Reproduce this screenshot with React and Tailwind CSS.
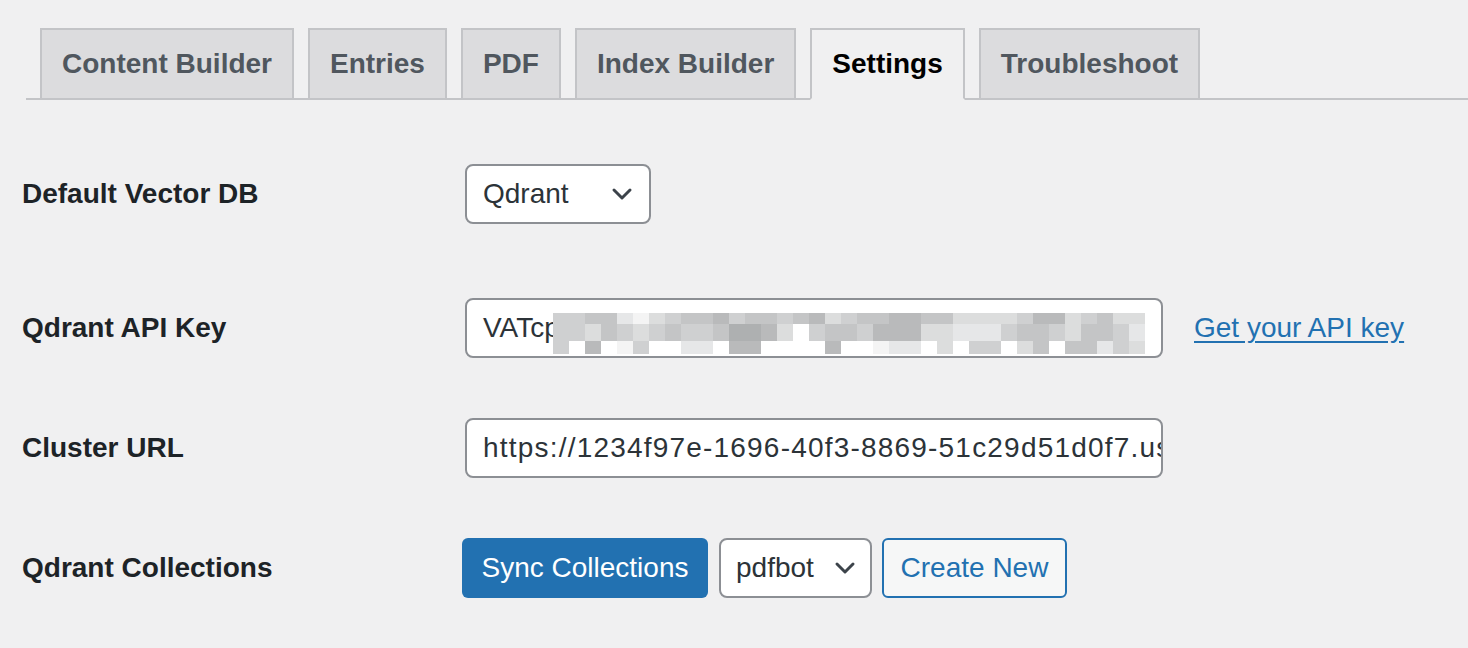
import React from 'react';

const tabs = [
  { label: 'Content Builder' },
  { label: 'Entries' },
  { label: 'PDF' },
  { label: 'Index Builder' },
  { label: 'Settings', active: true },
  { label: 'Troubleshoot' },
];

// pixelated (redacted) part of the API key
const blurRows = [
  { y: 0, h: 11, cells: '4455213455645545634556655333346634533' },
  { y: 11, h: 17, cells: '4435434544577630455466633222455435542' },
  { y: 28, h: 13, cells: '4060140022066000060012203044035055243' },
];
const blurColors = {
  0: '#ffffff',
  1: '#f4f4f4',
  2: '#e6e7e8',
  3: '#dcdddd',
  4: '#cfd0d1',
  5: '#c4c5c6',
  6: '#b9babb',
  7: '#aeb0b1',
};

const Chevron = ({ className = '' }) => (
  <svg className={className} width="22" height="14" viewBox="0 0 22 14" fill="none">
    <path d="M3 3l8 8 8-8" stroke="#3c434a" strokeWidth="3" strokeLinecap="round" strokeLinejoin="round" />
  </svg>
);

const Row = ({ label, className = '', children }) => (
  <div className={`flex items-center h-[60px] ${className}`}>
    <div className="w-[462px] pl-[22px] text-[28px] font-bold text-[#1d2327]">{label}</div>
    <div className="flex items-center">{children}</div>
  </div>
);

const inputBox =
  'h-[60px] bg-white border-2 border-[#8c8f94] rounded-[8px] flex items-center text-[28px] text-[#2c3338]';

export default function App() {
  return (
    <div className="min-h-[648px] bg-[#f0f0f1] font-['Liberation_Sans',Arial,sans-serif] overflow-hidden">
      {/* Tabs */}
      <div className="ml-[26px] pt-[28px] flex items-end border-b-2 border-[#c3c4c7]">
        {tabs.map((t) => (
          <div
            key={t.label}
            className={`ml-[14px] -mb-[2px] border-2 px-[20px] py-[10px] leading-[48px] text-[28px] font-bold ${
              t.active
                ? 'bg-[#f0f0f1] border-[#c3c4c7] border-b-[#f0f0f1] text-black'
                : 'bg-[#dcdcde] border-[#c3c4c7] text-[#50575e]'
            }`}
          >
            {t.label}
          </div>
        ))}
      </div>

      {/* Settings form */}
      <Row label="Default Vector DB" className="mt-[64px]">
        <div className={`${inputBox} ml-[3px] w-[186px] pl-[16px] pr-[16px] justify-between`}>
          <span>Qdrant</span>
          <Chevron />
        </div>
      </Row>

      <Row label="Qdrant API Key" className="mt-[74px]">
        <div className={`${inputBox} ml-[3px] w-[698px] pl-[16px] relative overflow-hidden`}>
          <span>VATcp</span>
          <svg className="absolute left-[86px] top-[13px]" width="592" height="41" viewBox="0 0 592 41">
            {blurRows.map((r) =>
              r.cells.split('').map((c, i) => (
                <rect key={`${r.y}-${i}`} x={i * 16} y={r.y} width="16" height={r.h} fill={blurColors[c]} />
              ))
            )}
          </svg>
        </div>
        <a href="#" className="ml-[31px] text-[28px] text-[#2271b1] underline underline-offset-[4px]">
          Get your API key
        </a>
      </Row>

      <Row label="Cluster URL" className="mt-[60px]">
        <input
          readOnly
          value="https://1234f97e-1696-40f3-8869-51c29d51d0f7.us-east4-0.gcp.cloud.qdrant.io"
          className={`${inputBox} ml-[3px] w-[698px] pl-[16px] outline-none tracking-[1.2px]`}
        />
      </Row>

      <Row label="Qdrant Collections" className="mt-[60px]">
        <button className="h-[60px] w-[246px] rounded-[6px] bg-[#2271b1] text-white text-[28px] whitespace-nowrap">
          Sync Collections
        </button>
        <div className={`${inputBox} ml-[11px] w-[153px] pl-[15px] pr-[14px] justify-between rounded-[6px]`}>
          <span>pdfbot</span>
          <Chevron />
        </div>
        <button className="ml-[10px] h-[60px] w-[185px] rounded-[6px] border-2 border-[#2271b1] bg-[#f6f7f7] text-[#2271b1] text-[28px] whitespace-nowrap">
          Create New
        </button>
      </Row>
    </div>
  );
}
